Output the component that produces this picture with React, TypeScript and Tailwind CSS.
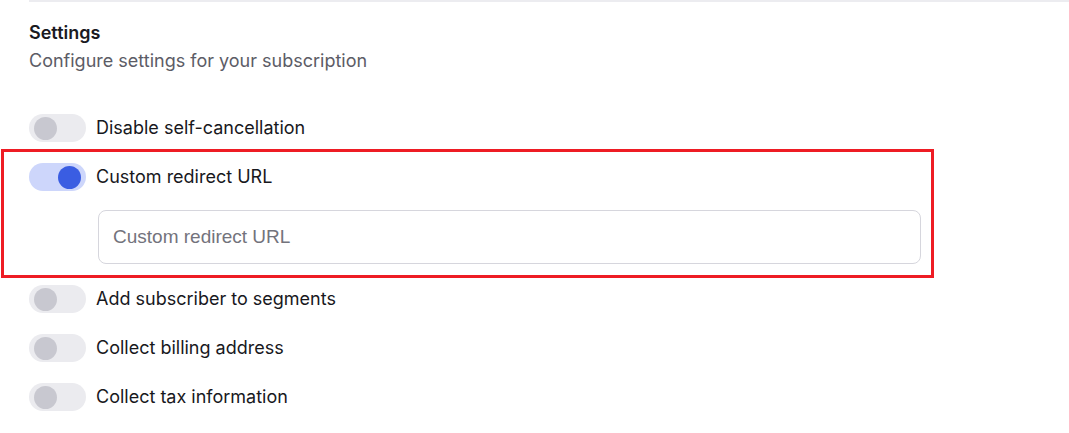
import React from "react";

function Toggle({ on }: { on?: boolean }) {
  return (
    <div
      className={
        "relative h-[28px] w-[57px] shrink-0 rounded-full " +
        (on ? "bg-[#cdd6fb]" : "bg-[#ebebef]")
      }
    >
      <div
        className={
          "absolute top-[3px] h-[23px] w-[23px] rounded-full " +
          (on ? "left-[29px] bg-[#3a5de2]" : "left-[5px] bg-[#c8c8d0]")
        }
      />
    </div>
  );
}

function Row({ label, on }: { label: string; on?: boolean }) {
  return (
    <div className="flex items-center gap-[10px]">
      <Toggle on={on} />
      <span className="text-[18px] leading-[28px] text-[#18181d]">{label}</span>
    </div>
  );
}

export default function App() {
  return (
    <div className="h-[433px] w-[1069px] overflow-hidden bg-white" style={{ fontFamily: "Inter, 'Noto Sans', sans-serif" }}>
      <div className="ml-[29px] border-t-2 border-[#ececf0] pt-[18px]">
        <div className="text-[18px] font-semibold leading-[26px] text-[#1a1a1f]">Settings</div>
        <div className="mt-[2px] text-[18px] leading-[26px] text-[#5c5c66]">
          Configure settings for your subscription
        </div>
        <div className="mt-[40px] flex flex-col gap-[21px]">
          <Row label="Disable self-cancellation" />
          <div className="-my-[14px] -ml-[28px] mr-[135px] border-[3px] border-[#ee1c24] py-[11px] pl-[25px] pr-[10px]">
            <Row label="Custom redirect URL" on />
            <div className="ml-[69px] mt-[19px]">
              <input
                placeholder="Custom redirect URL"
                className="h-[54px] w-full rounded-[8px] border border-[#d6d6dd] px-[14px] text-[19px] text-[#1c1c22] outline-none placeholder:text-[#73737c]"
                style={{ fontFamily: "'Liberation Sans', Arial, sans-serif" }}
              />
            </div>
          </div>
          <Row label="Add subscriber to segments" />
          <Row label="Collect billing address" />
          <Row label="Collect tax information" />
        </div>
      </div>
    </div>
  );
}
